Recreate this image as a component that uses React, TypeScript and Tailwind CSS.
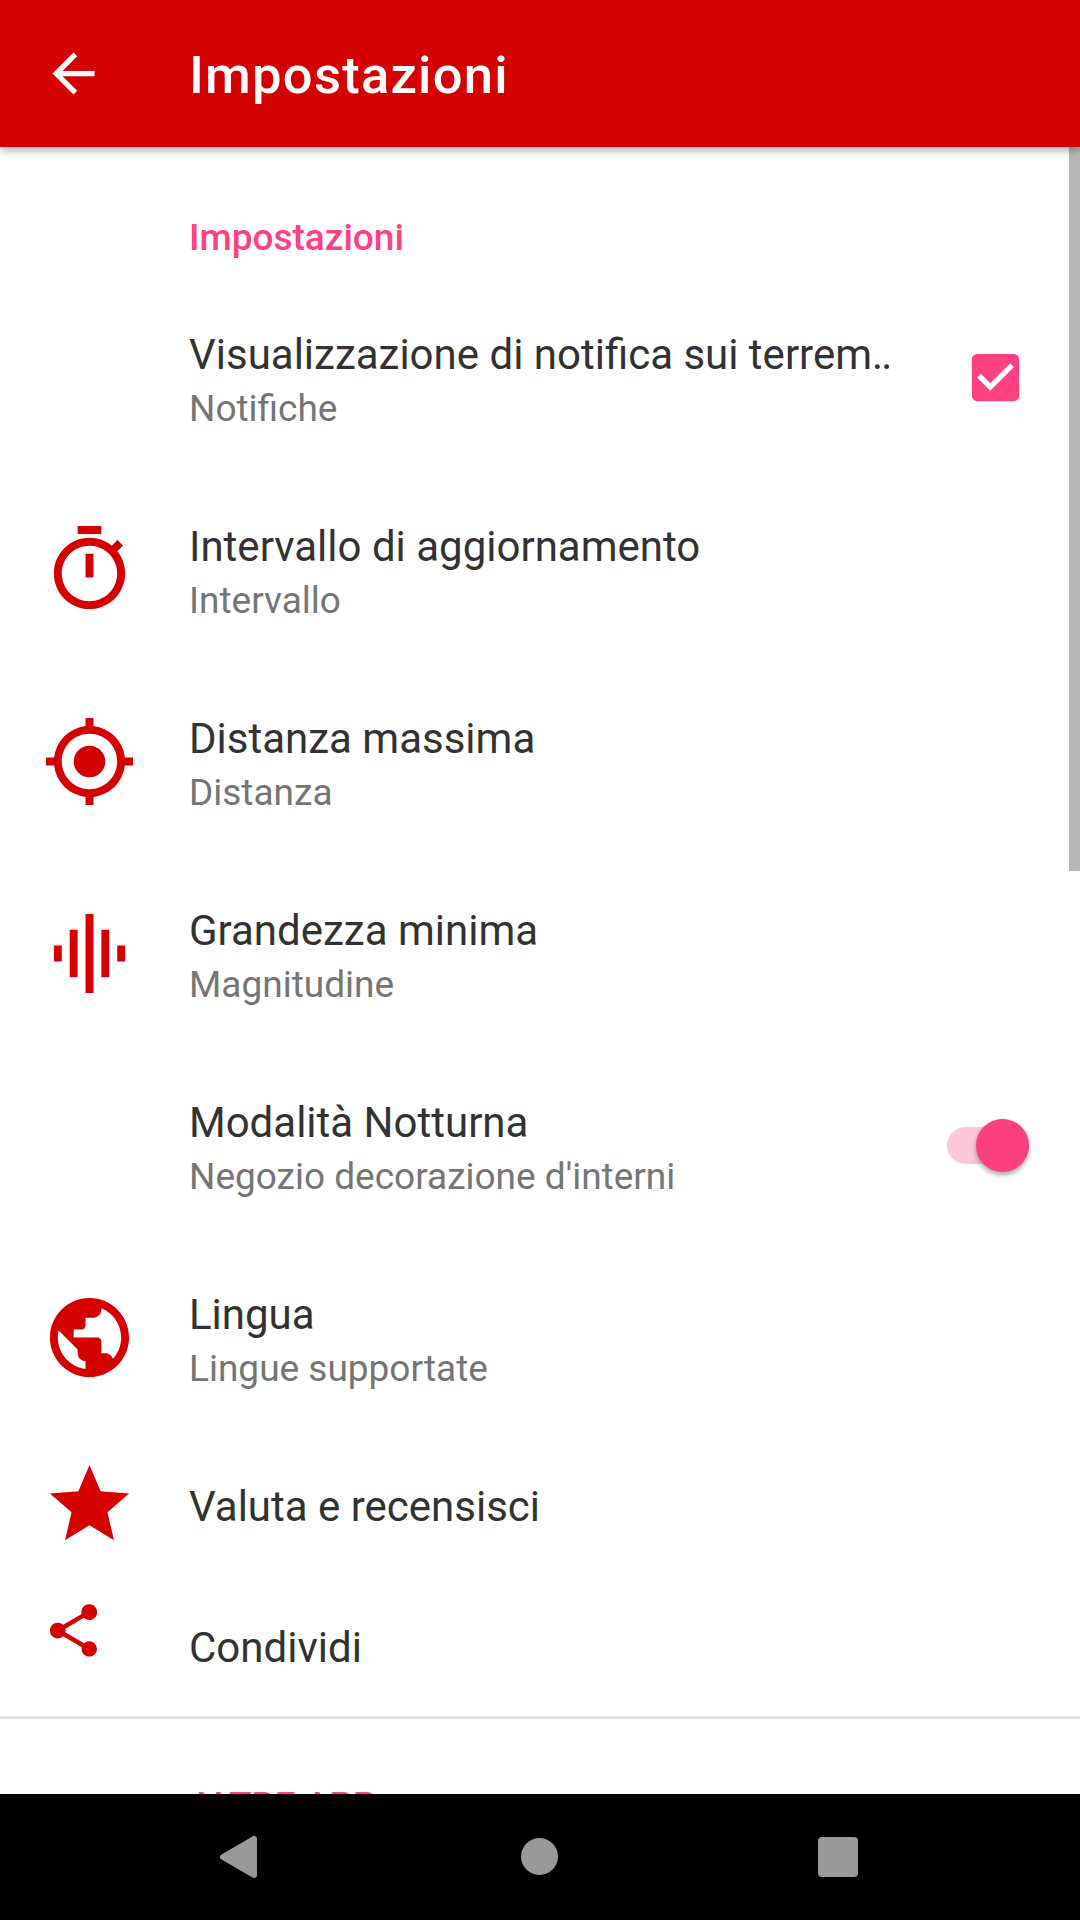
import React, { useState } from 'react';
import type { IconType } from 'react-icons';
import {
  MdArrowBack,
  MdCheckBox,
  MdCheckBoxOutlineBlank,
  MdGraphicEq,
  MdMyLocation,
  MdPublic,
  MdShare,
  MdStar,
} from 'react-icons/md';

interface PreferenceProps {
  title: React.ReactNode;
  summary?: string;
  icon?: React.ReactNode;
  widget?: React.ReactNode;
  onClick?: () => void;
}

const TimerIcon = () => (
  <svg viewBox="0 0 24 24" fill="currentColor" className="size-[95px]">
    <path d="M15 1H9v2h6V1zm-4 13h2V8h-2v6zm8.03-6.61l1.42-1.42c-.43-.51-.9-.99-1.41-1.41l-1.42 1.42C16.07 4.74 14.12 4 12 4c-4.97 0-9 4.03-9 9s4.02 9 9 9 9-4.03 9-9c0-2.12-.74-4.07-1.97-5.61zM12 20c-3.87 0-7-3.13-7-7s3.13-7 7-7 7 3.13 7 7-3.13 7-7 7z" />
  </svg>
);

const LargeIcon = ({ icon: Icon }: { icon: IconType }) => <Icon className="size-[95px]" />;

const Preference: React.FC<PreferenceProps> = ({ title, summary, icon, widget, onClick }) => (
  <div
    onClick={onClick}
    className={`flex items-center pl-[42px] pr-[40px] ${summary ? 'h-[192px]' : 'h-[141px]'}`}
  >
    <div className="w-[147px] shrink-0 text-[#d50000]">{icon}</div>
    <div className={`min-w-0 flex-1 ${summary ? 'pt-[7px]' : 'pt-[5px]'}`}>
      <h3 className="whitespace-nowrap text-[42px] leading-[56px] text-[#323232]">{title}</h3>
      {summary && <p className="whitespace-nowrap text-[37px] leading-[52px] text-[#757575]">{summary}</p>}
    </div>
    {widget}
  </div>
);

const Switch = ({ checked }: { checked: boolean }) => (
  <div
    className={`flex h-[37px] w-[82px] items-center rounded-full ${
      checked ? 'justify-end bg-[#ffc5d9]' : 'justify-start bg-gray-300'
    }`}
  >
    <div
      className={`size-[53px] shrink-0 rounded-full shadow-[0_3px_5px_rgba(0,0,0,0.35)] ${
        checked ? 'bg-[#fc407f]' : 'bg-gray-50'
      }`}
    ></div>
  </div>
);

export default function App() {
  const [notifications, setNotifications] = useState(true);
  const [nightMode, setNightMode] = useState(true);

  return (
    <div className="flex h-[1920px] w-[1080px] flex-col overflow-hidden bg-white font-['Roboto',sans-serif]">
      {/* App bar */}
      <header className="z-10 flex h-[147px] shrink-0 items-center bg-[#d50000] pl-[42px] text-white shadow-[0_3px_9px_rgba(0,0,0,0.35)]">
        <button className="w-[147px]">
          <MdArrowBack className="size-[63px]" />
        </button>
        <h1 className="pt-[3px] text-[52.5px] font-medium leading-[60px] tracking-[1.25px]">Impostazioni</h1>
      </header>

      <main className="flex min-h-0 flex-1 justify-between overflow-hidden">
        <div className="w-[1069px] shrink-0">
          <h2 className="h-[134.5px] pl-[189px] pt-[69px] text-[37px] font-medium leading-[44px] text-[#ff4081]">
            Impostazioni
          </h2>
          <Preference
            title={
              <>
                Visualizzazione di notifica sui terrem<span className="tracking-[-2px]">..</span>
              </>
            }
            summary="Notifiche"
            onClick={() => setNotifications(!notifications)}
            widget={
              <span className="mr-[2px] text-[#ff4081]">
                {notifications ? <MdCheckBox className="size-[63px]" /> : <MdCheckBoxOutlineBlank className="size-[63px]" />}
              </span>
            }
          />
          <Preference title="Intervallo di aggiornamento" summary="Intervallo" icon={<TimerIcon />} />
          <Preference title="Distanza massima" summary="Distanza" icon={<LargeIcon icon={MdMyLocation} />} />
          <Preference title="Grandezza minima" summary="Magnitudine" icon={<LargeIcon icon={MdGraphicEq} />} />
          <Preference
            title="Modalità Notturna"
            summary="Negozio decorazione d'interni"
            onClick={() => setNightMode(!nightMode)}
            widget={<Switch checked={nightMode} />}
          />
          <Preference title="Lingua" summary="Lingue supportate" icon={<LargeIcon icon={MdPublic} />} />
          <Preference title="Valuta e recensisci" icon={<LargeIcon icon={MdStar} />} />
          <Preference title="Condividi" icon={<MdShare className="mb-[30px] size-[63px]" />} />
          <div className="mt-[0.5px] -mr-[11px] border-t-[3px] border-[#e0e0e0] pl-[189px] pt-[65px]">
            <h2 className="text-[37px] font-medium leading-[44px] text-[#ff4081]">ALTRE APP</h2>
          </div>
        </div>
        {/* Scrollbar */}
        <div className="h-[724px] w-[11px] bg-[#b7b7b7]"></div>
      </main>

      {/* System navigation */}
      <nav className="z-10 flex h-[126px] shrink-0 items-center justify-between bg-black pl-[219px] pr-[222px] text-[#999999]">
        <button>
          <svg viewBox="0 0 38 44" fill="currentColor" stroke="currentColor" className="h-[44px] w-[38px]">
            <path d="M4 22L35 4v36z" strokeWidth="6" strokeLinejoin="round" />
          </svg>
        </button>
        <button className="mb-px ml-[4px] size-[37px] rounded-full bg-[#999999]"></button>
        <button className="size-[40px] rounded-[4px] bg-[#999999]"></button>
      </nav>
    </div>
  );
}
